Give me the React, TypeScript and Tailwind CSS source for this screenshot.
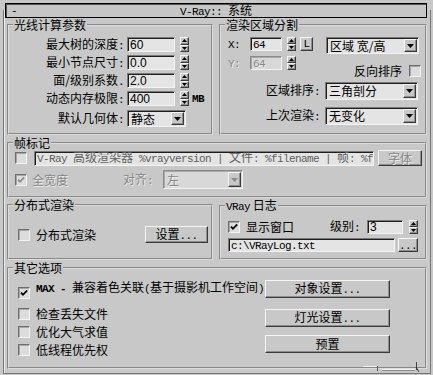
import React from "react";

const raised =
  "border border-t-[#f6f6f6] border-l-[#f6f6f6] border-b-[#3a3a3a] border-r-[#3a3a3a] shadow-[inset_-1px_-1px_0_#8e8e8e] bg-[#c8c8c8]";
const sunken =
  "border border-t-[#7a7a7a] border-l-[#7a7a7a] border-b-[#f4f4f4] border-r-[#f4f4f4] shadow-[inset_1px_1px_0_#1e1e1e] bg-[#e4e4e4]";
const sunkenOff =
  "border border-t-[#8a8a8a] border-l-[#8a8a8a] border-b-[#f4f4f4] border-r-[#f4f4f4] shadow-[inset_1px_1px_0_#a8a8a8] bg-[#d8d8d8]";
const dim = "text-[#868686] [text-shadow:1px_1px_0_#ececec]";

type Kids = { children?: React.ReactNode; className?: string };

// SimSun-ish half-width latin
const M = ({ children, className = "" }: Kids) => (
  <span className={`font-['Liberation_Mono',monospace] text-[11px] tracking-[-0.6px] ${className}`}>
    {children}
  </span>
);

const Field = ({ children, className = "", off }: Kids & { off?: boolean }) => (
  <div
    className={`flex items-center overflow-hidden whitespace-pre pl-[2px] ${off ? sunkenOff : sunken} ${className}`}
  >
    <span>{children}</span>
  </div>
);

const Spinner = ({ className = "h-[15px]" }: Kids) => (
  <div className={`flex w-[9px] shrink-0 flex-col ${className}`}>
    <div className={`flex flex-1 items-center justify-center ${raised}`}>
      <svg width="5" height="3" viewBox="0 0 5 3">
        <path d="M2.5 0L5 3H0Z" fill="#000" />
      </svg>
    </div>
    <div className={`flex flex-1 items-center justify-center ${raised}`}>
      <svg width="5" height="3" viewBox="0 0 5 3">
        <path d="M0 0H5L2.5 3Z" fill="#000" />
      </svg>
    </div>
  </div>
);

const Select = ({ children, className = "", off }: Kids & { off?: boolean }) => (
  <div className={`flex shrink-0 p-[1px] ${off ? sunkenOff : sunken} ${className}`}>
    <div className={`flex flex-1 items-center whitespace-pre pl-[2px] ${off ? dim : ""}`}>
      <span>{children}</span>
    </div>
    <div className={`flex w-[13px] items-center justify-center ${raised}`}>
      <svg width="7" height="4" viewBox="0 0 7 4">
        <path d="M0 0H7L3.5 4Z" fill={off ? "#8a8a8a" : "#000"} />
      </svg>
    </div>
  </div>
);

const Box = ({ on, off }: { on?: boolean; off?: boolean }) => (
  <div className="flex h-[12px] w-[12px] shrink-0 items-center justify-center border border-t-[#6e6e6e] border-l-[#6e6e6e] border-b-[#f4f4f4] border-r-[#f4f4f4] bg-[#dcdcdc] shadow-[inset_1px_1px_0_#a6a6a6]">
    {on && (
      <svg width="8" height="8" viewBox="0 0 8 8">
        <path d="M1 3.6L3 5.8L7.2 1.4" fill="none" stroke={off ? "#8c8c8c" : "#000"} strokeWidth="1.8" />
      </svg>
    )}
  </div>
);

const Btn = ({ children, className = "", off }: Kids & { off?: boolean }) => (
  <button type="button" className={`flex shrink-0 items-center justify-center ${raised} ${off ? dim : ""} ${className}`}>
    <span>{children}</span>
  </button>
);

const Group = ({ title, children, className = "" }: Kids & { title: React.ReactNode }) => (
  <fieldset
    className={`relative min-w-0 shrink-0 border-2 border-[#dcdcdc] [--tw-border-style:groove] [border-style:groove] ${className}`}
  >
    <legend className="ml-[4px] px-[1px] leading-[14px]">{title}</legend>
    {children}
  </fieldset>
);

const rayRows = [
  { label: "最大树的深度", colon: ":", value: "60" },
  { label: "最小节点尺寸", colon: ":", value: "0.0" },
  { label: "面/级别系数", colon: ".", value: "2.0" },
  { label: "动态内存极限", colon: ":", value: "400", mb: true },
];

const App = () => {
  return (
    <div className="h-[375px] w-[433px] overflow-hidden bg-[#c8c8c8] pl-[3px] pt-[10px] font-['Noto_Sans_CJK_SC','Liberation_Sans',sans-serif] text-[12px] leading-[14px] text-black">
      <div className="flex h-[364px] w-[428px] flex-col border-x border-b border-[#767676] pl-[3px] pr-[3px] shadow-[inset_1px_0_0_#ededed]">
        {/* rollout title */}
        <div className="-ml-[2px] -mt-[7px] grid h-[15px] w-[422px] grid-cols-[1fr_auto_1fr] items-center border border-black bg-[#c6c6c6] leading-[12px] shadow-[inset_1px_1px_0_#555]">
          <M className="pl-[5px]">-</M>
          <span>
            <M>V-Ray:: </M>系统
          </span>
          <span />
        </div>

        <div className="flex gap-[6px]">
          <Group title="光线计算参数" className="h-[117px] w-[206px]">
            <div className="flex flex-col gap-[3px] pt-[5px]">
              {rayRows.map((r) => (
                <div key={r.label} className="flex h-[15px] items-center">
                  <span className="w-[115px] text-right">
                    {r.label}
                    <M>{r.colon}</M>
                  </span>
                  <Field className="ml-[3px] h-[15px] w-[48px] font-['Liberation_Sans',sans-serif]">{r.value}</Field>
                  <Spinner className="ml-[5px] h-[15px]" />
                  {r.mb && <M className="ml-[3px] font-bold">MB</M>}
                </div>
              ))}
              <div className="mt-[1px] flex h-[17px] items-center">
                <span className="w-[115px] text-right">
                  默认几何体<M>:</M>
                </span>
                <Select className="ml-[3px] h-[17px] w-[59px]">静态</Select>
              </div>
            </div>
          </Group>

          <Group title="渲染区域分割" className="h-[117px] w-[208px]">
            <div className="flex pl-[7px] pt-[5px]">
              <div className="flex flex-col gap-[5px]">
                <div className="flex h-[14px] items-center">
                  <div className="w-[22px]">
                    <M>X:</M>
                  </div>
                  <Field className="h-[14px] w-[32px]">
                    <M>64</M>
                  </Field>
                  <Spinner className="ml-[5px] h-[14px]" />
                  <div className={`ml-[4px] flex h-[14px] w-[13px] items-center justify-center ${raised}`}>
                    <M>L</M>
                  </div>
                </div>
                <div className="flex h-[14px] items-center">
                  <div className={`w-[22px] ${dim}`}>
                    <M>Y:</M>
                  </div>
                  <Field off className={`h-[14px] w-[32px] ${dim}`}>
                    <M>64</M>
                  </Field>
                  <Spinner className="ml-[5px] h-[14px]" />
                </div>
              </div>
              <div className="ml-[13px] flex w-[95px] flex-col">
                <Select className="h-[17px] w-[93px]">区域 宽/高</Select>
                <div className="mt-[10px] flex h-[13px] items-center justify-end">
                  <span>反向排序</span>
                  <div className="ml-[7px]">
                    <Box />
                  </div>
                </div>
              </div>
            </div>
            <div className="mt-[5px] flex flex-col gap-[7px]">
              <div className="flex h-[18px] items-center">
                <span className="w-[99px] text-right">
                  区域排序<M>:</M>
                </span>
                <Select className="ml-[5px] h-[18px] w-[93px]">三角剖分</Select>
              </div>
              <div className="flex h-[18px] items-center">
                <span className="w-[99px] text-right">
                  上次渲染<M>:</M>
                </span>
                <Select className="ml-[5px] h-[18px] w-[93px]">无变化</Select>
              </div>
            </div>
          </Group>
        </div>

        <Group title="帧标记" className="mt-[1px] h-[62px] w-[420px]">
          <div className="flex h-[16px] items-center pl-[6px]">
            <Box />
            <Field className="ml-[7px] h-[15px] w-[340px] text-[#5e5e5e]">
              <M>V-Ray </M>高级渲染器<M> %vrayversion | </M>文件<M>: %filename | </M>帧<M>: %f</M>
            </Field>
            <Btn off className="ml-[4px] h-[16px] w-[44px]">
              字体
            </Btn>
          </div>
          <div className="mt-[4px] flex h-[19px] items-center pl-[6px]">
            <Box on off />
            <span className={`ml-[5px] ${dim}`}>全宽度</span>
            <span className={`ml-[55px] ${dim}`}>
              对齐<M>:</M>
            </span>
            <Select off className="ml-[10px] h-[19px] w-[80px]">
              左
            </Select>
          </div>
        </Group>

        <div className="flex gap-[6px]">
          <Group title="分布式渲染" className="h-[62px] w-[206px]">
            <div className="mt-[14px] flex h-[17px] items-center pl-[9px] pr-[3px]">
              <Box />
              <span className="ml-[6px]">分布式渲染</span>
              <Btn className="ml-auto h-[17px] w-[63px]">
                设置<M>...</M>
              </Btn>
            </div>
          </Group>
          <Group
            title={
              <>
                <M>VRay</M> 日志
              </>
            }
            className="h-[62px] w-[208px]"
          >
            <div className="mt-[6px] flex h-[14px] items-center pl-[7px] pr-[7px]">
              <Box on />
              <span className="ml-[6px]">显示窗口</span>
              <span className="ml-auto">
                级别<M>:</M>
              </span>
              <Field className="ml-[7px] h-[14px] w-[36px] font-['Liberation_Sans',sans-serif]">3</Field>
              <Spinner className="ml-[6px] h-[14px]" />
            </div>
            <div className="mt-[4px] flex h-[14px] items-center pl-[7px]">
              <Field className="h-[14px] w-[167px]">
                <M>c:\VRayLog.txt</M>
              </Field>
              <Btn className="ml-[3px] h-[14px] w-[20px]">
                <M>...</M>
              </Btn>
            </div>
          </Group>
        </div>

        <Group title="其它选项" className="mt-[1px] h-[108px] w-[420px]">
          <div className="flex pt-[5px]">
            <div className="flex flex-1 flex-col pl-[9px]">
              <div className="flex h-[25px] items-start">
                <div className="mt-[7px]">
                  <Box on />
                </div>
                <span className="ml-[6px]">
                  <M className="text-[10px] font-bold">MAX - </M>兼容着色关联<M>(</M>基于摄影机工作空间<M>)</M>
                </span>
              </div>
              {["检查丢失文件", "优化大气求值", "低线程优先权"].map((t) => (
                <div key={t} className="flex h-[18px] items-center">
                  <Box />
                  <span className="ml-[6px]">{t}</span>
                </div>
              ))}
            </div>
            <div className="mr-[35px] flex w-[125px] flex-col">
              <Btn className="h-[18px] w-[125px]">
                对象设置<M>...</M>
              </Btn>
              <Btn className="mt-[11px] h-[18px] w-[125px]">
                灯光设置<M>...</M>
              </Btn>
              <Btn className="mt-[8px] h-[18px] w-[125px]">预置</Btn>
            </div>
          </div>
          <svg className="absolute left-[346px] top-[82px]" width="70" height="20" viewBox="0 0 70 20">
            <path d="M8 9.5H22" stroke="#f0f0f0" />
            <path d="M22.5 9V14" stroke="#555" />
            <path d="M27 12.5H60" stroke="#f2f2f2" />
            <path d="M27 13.5H60" stroke="#8a8a8a" />
            <path d="M61.5 5V13" stroke="#444" />
            <path d="M61 10L64 15" stroke="#333" />
          </svg>
        </Group>
      </div>
    </div>
  );
};

export default App;
